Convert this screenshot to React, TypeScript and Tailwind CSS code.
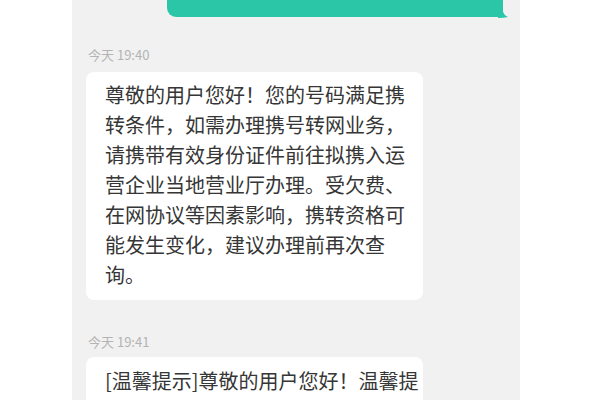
import React from "react";

const font = { fontFamily: '"Noto Sans CJK SC", "Noto Sans", sans-serif' };

export default function App() {
  const lines1 = [
    "尊敬的用户您好！您的号码满足携",
    "转条件，如需办理携号转网业务，",
    "请携带有效身份证件前往拟携入运",
    "营企业当地营业厅办理。受欠费、",
    "在网协议等因素影响，携转资格可",
    "能发生变化，建议办理前再次查",
    "询。",
  ];
  const lines2 = [
    "[温馨提示]尊敬的用户您好！温馨提",
    "醒您，携号转网业务办理前请确认",
  ];
  return (
    <div className="w-[600px] h-[400px] bg-white overflow-hidden flex" style={font}>
      <div className="ml-[72px] w-[448px] h-full bg-[#f1f1f1] flex flex-col overflow-hidden">
        <div className="shrink-0 relative ml-[95px] w-[336px] h-[17px] bg-[#2bc6a8] rounded-b-[9px] rounded-br-[4px]">
          <svg className="absolute right-[-5px] bottom-[-1px]" width="10" height="10" viewBox="0 0 10 10">
            <path d="M0 0 L4 0 Q5 7 10 9 Q6 10 0 10 Z" fill="#2bc6a8" />
          </svg>
        </div>
        <div className="shrink-0 mt-[31px] ml-[16px] text-[13px] leading-[14px] text-[#b3b3b3]">今天 19:40</div>
        <div className="shrink-0 mt-[10px] ml-[14px] w-[337px] bg-white rounded-[8px] pl-[19px] pt-[8px] pb-[10px]">
          {lines1.map((l, i) => (
            <div key={i} className="text-[20px] leading-[30px] text-[#363636] whitespace-nowrap">{l}</div>
          ))}
        </div>
        <div className="shrink-0 mt-[35px] ml-[16px] text-[13px] leading-[14px] text-[#b3b3b3]">今天 19:41</div>
        <div className="shrink-0 mt-[8px] ml-[14px] w-[337px] bg-white rounded-[8px] pl-[19px] pt-[9px] pb-[10px]">
          {lines2.map((l, i) => (
            <div key={i} className="text-[20px] leading-[30px] text-[#363636] whitespace-nowrap">{l}</div>
          ))}
        </div>
      </div>
    </div>
  );
}
